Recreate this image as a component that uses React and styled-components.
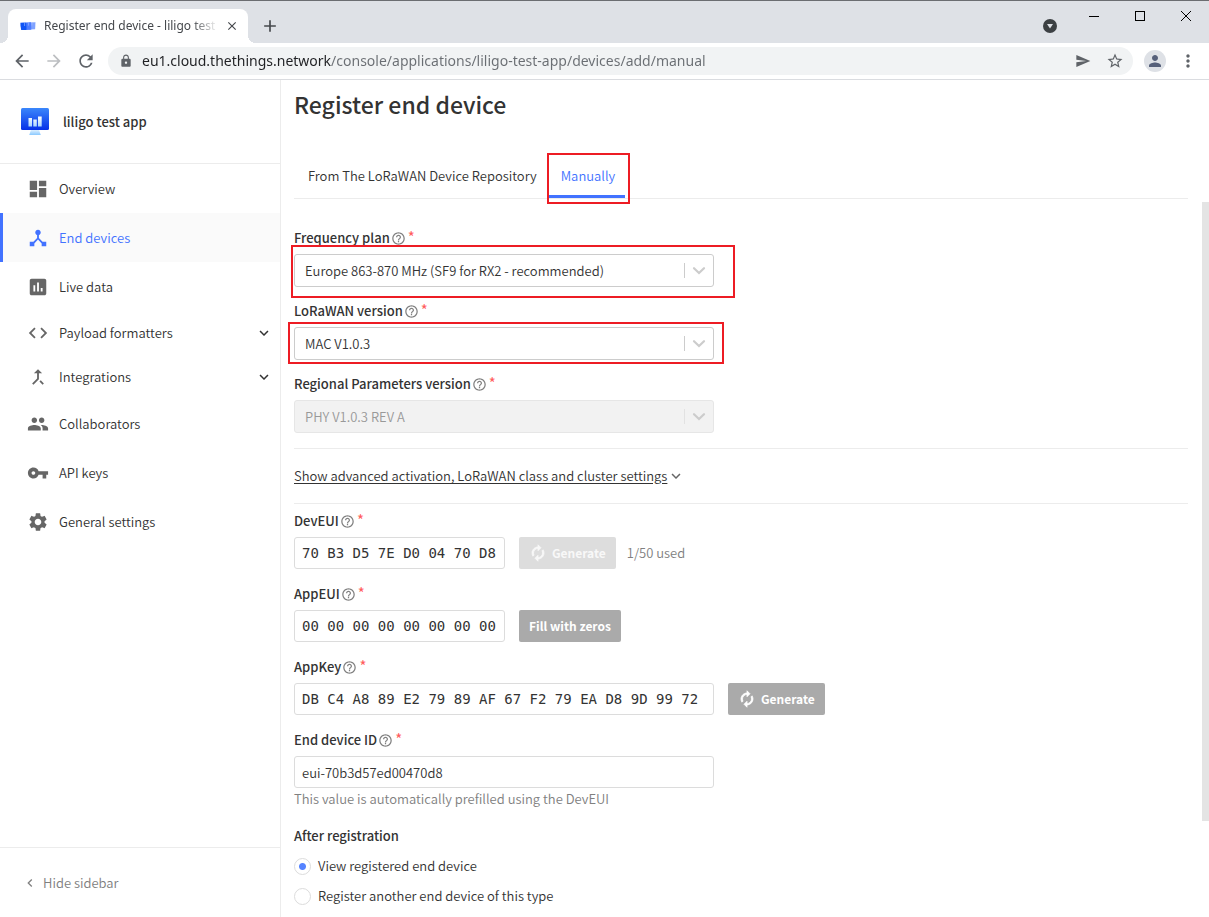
import React, { useState } from 'react';
import styled, { createGlobalStyle, css } from 'styled-components';
import {
  MdDashboard,
  MdDeviceHub,
  MdInsertChart,
  MdCode,
  MdCallMerge,
  MdPeople,
  MdVpnKey,
  MdSettings,
  MdKeyboardArrowDown,
  MdKeyboardArrowLeft,
  MdAutorenew,
  MdHelpOutline,
  MdSend,
  MdStarBorder,
  MdPerson,
  MdMoreVert,
  MdArrowBack,
  MdArrowForward,
  MdRefresh,
  MdLock,
  MdAdd,
  MdClose,
} from 'react-icons/md';

const color = {
  text: '#333333',
  subtle: '#808080',
  icon: '#666666',
  line: '#ececec',
  field: '#dcdcdc',
  blue: '#4272ff',
  red: '#ff5c5c',
  mark: '#ed1c24',
  chrome: '#dee1e6',
  chromeIcon: '#5f6368',
};

const GlobalStyle = createGlobalStyle`
  *, *::before, *::after { box-sizing: border-box; }
  body {
    margin: 0;
    background: #ffffff;
    color: ${color.text};
    font-family: 'Noto Sans CJK SC', 'Noto Sans', sans-serif;
    font-size: 13px;
    font-weight: 350;
    line-height: 18px;
  }
  button, input, select { font: inherit; color: inherit; margin: 0; }
  svg { display: block; flex: none; }
`;

const Window = styled.div`
  display: flex;
  flex-direction: column;
  height: 100vh;
  overflow: hidden;
`;

/* Browser frame */

const TabStrip = styled.div`
  display: flex;
  flex: none;
  height: 43px;
  padding-left: 8px;
  background: ${color.chrome};
  border-top: 1px solid #6b6d71;
`;

const BrowserTab = styled.div`
  position: relative;
  display: flex;
  align-items: center;
  width: 240px;
  height: 34px;
  margin-top: 8px;
  padding: 0 9px 0 12px;
  background: #ffffff;
  border-radius: 8px 8px 0 0;
  &::before, &::after {
    content: '';
    position: absolute;
    bottom: 0;
    width: 8px;
    height: 8px;
  }
  &::before {
    right: 100%;
    background: radial-gradient(circle at 0 0, transparent 8px, #ffffff 8px);
  }
  &::after {
    left: 100%;
    background: radial-gradient(circle at 100% 0, transparent 8px, #ffffff 8px);
  }
`;

const TabTitle = styled.span`
  flex: 1;
  margin: 0 7px 0 8px;
  overflow: hidden;
  white-space: nowrap;
  color: #45484c;
  font-family: 'Noto Sans', sans-serif;
  font-size: 12px;
  font-weight: 400;
  line-height: 20px;
  mask-image: linear-gradient(to right, #000 85%, transparent);
`;

const PlainButton = styled.button`
  display: flex;
  align-items: center;
  justify-content: center;
  width: ${(p) => p.$w || 16}px;
  padding: 0;
  border: 0;
  background: none;
  color: ${(p) => p.$color || color.chromeIcon};
`;

const NewTabButton = styled(PlainButton)`
  height: 34px;
  margin-top: 8px;
`;

const WindowControls = styled.div`
  display: flex;
  margin-left: auto;
  height: 29px;
`;

const Toolbar = styled.div`
  display: flex;
  flex: none;
  align-items: center;
  height: 37px;
  padding: 0 13px;
  border-bottom: 1px solid #dadce0;
  background: #ffffff;
`;

const NavButtons = styled.div`
  display: flex;
  gap: 14px;
  margin-right: 13px;
`;

const AddressBar = styled.div`
  display: flex;
  flex: 1;
  align-items: center;
  height: 28px;
  padding: 0 10px 0 11px;
  border-radius: 14px;
  background: #f1f3f4;
`;

const AddressInput = styled.input`
  flex: 1;
  min-width: 0;
  margin-left: 9px;
  padding: 0;
  border: 0;
  outline: 0;
  font-family: 'Noto Sans', sans-serif;
  font-size: 14px;
  font-weight: 400;
  line-height: 20px;
  color: transparent;
  background: linear-gradient(to right, #202124 189px, #6a6e73 189px);
  background-clip: text;
`;

const Avatar = styled.button`
  display: flex;
  align-items: center;
  justify-content: center;
  width: 22px;
  height: 22px;
  margin: 0 14px 0 11px;
  padding: 0;
  border: 0;
  border-radius: 50%;
  background: ${color.chrome};
  color: #56607a;
`;

/* Console */

const Body = styled.div`
  display: flex;
  flex: 1;
  min-height: 0;
`;

const Sidebar = styled.aside`
  display: flex;
  flex: none;
  flex-direction: column;
  width: 281px;
  border-right: 1px solid ${color.line};
`;

const AppHeader = styled.header`
  display: flex;
  align-items: center;
  gap: 14px;
  height: 84px;
  padding-left: 21px;
  border-bottom: 1px solid ${color.line};
  font-weight: 500;
`;

const Nav = styled.nav`
  display: flex;
  flex: 1;
  flex-direction: column;
`;

const itemStyle = css`
  display: flex;
  align-items: center;
  width: 100%;
  height: ${(p) => (p.$group ? 44 : 49)}px;
  padding: 0 7px 0 24px;
  border: 0;
  border-left: 3px solid ${(p) => (p.$active ? color.blue : 'transparent')};
  background: ${(p) => (p.$active ? '#fafafa' : 'none')};
  color: ${(p) => (p.$active ? color.blue : color.text)};
  text-decoration: none;
  > svg:first-child { color: ${(p) => (p.$active ? color.blue : color.icon)}; }
`;

const NavLink = styled.a`${itemStyle}`;
const NavGroup = styled.button`${itemStyle}`;

const NavLabel = styled.span`
  flex: 1;
  margin-left: 10px;
  text-align: left;
`;

const HideButton = styled.button`
  display: flex;
  align-items: center;
  gap: 5px;
  height: 70px;
  padding: 0 22px;
  border: 0;
  border-top: 1px solid ${color.line};
  background: none;
  color: ${color.subtle};
`;

const Main = styled.main`
  flex: 1;
  min-width: 0;
  overflow: hidden;
  padding: 8px 14px 0 13px;
`;

const ScrollTrack = styled.div`
  display: flex;
  flex: none;
  width: 7px;
  padding: 122px 0 96px;
`;

const ScrollThumb = styled.div`
  flex: 1;
  background: #e4e4e4;
`;

const Title = styled.h1`
  margin: 0;
  font-size: 23px;
  line-height: 32px;
  font-weight: 500;
`;

const Tabs = styled.div`
  display: flex;
  height: 46px;
  margin-top: 33px;
  border-bottom: 1px solid ${color.line};
`;

const TabButton = styled.button`
  position: relative;
  padding: 3px 10px 0 14px;
  border: 0;
  border-bottom: 3px solid ${(p) => (p.$active ? color.blue : 'transparent')};
  background: none;
  color: ${(p) => (p.$active ? color.blue : color.text)};
`;

/* Red frame laid over a part of the page that the reader should notice. */
const Mark = styled.span`
  position: absolute;
  inset: ${(p) => p.$inset};
  border: 2px solid ${color.mark};
  pointer-events: none;
`;

const Form = styled.form`
  display: flex;
  flex-direction: column;
`;

const Fields = styled.div`
  display: flex;
  flex-direction: column;
  gap: ${(p) => p.$gap}px;
  padding: ${(p) => p.$pad};
`;

const Label = styled.label`
  display: flex;
  align-items: center;
  height: 18px;
  margin-bottom: 7px;
  font-weight: 500;
  > svg { margin: 1px 0 0 1px; color: #808080; }
`;

const Star = styled.span`
  align-self: flex-start;
  margin: -1px 0 0 2px;
  color: ${color.red};
  font-size: 15px;
  font-weight: 400;
`;

const Row = styled.div`
  display: flex;
  align-items: center;
  gap: 14px;
`;

const SelectBox = styled.div`
  position: relative;
  width: 420px;
  height: 33px;
`;

const Select = styled.select`
  appearance: none;
  width: 100%;
  height: 100%;
  padding: 0 40px 0 10px;
  border: 1px solid ${(p) => (p.disabled ? '#e6e6e6' : '#cccccc')};
  border-radius: 3px;
  background: ${(p) => (p.disabled ? '#f2f2f2' : '#ffffff')};
  color: ${(p) => (p.disabled ? '#999999' : color.text)};
  opacity: 1;
`;

const Arrow = styled.span`
  position: absolute;
  top: 9px;
  right: 1px;
  display: flex;
  align-items: center;
  justify-content: center;
  width: 29px;
  height: 15px;
  border-left: 1px solid ${(p) => (p.$disabled ? '#e2e2e2' : '#cccccc')};
  pointer-events: none;
`;

const Input = styled.input`
  width: ${(p) => (p.$short ? 211 : 420)}px;
  height: 32px;
  padding: 0 7px;
  border: 1px solid ${color.field};
  border-radius: 3px;
  background: #ffffff;
  ${(p) => p.$mono && css`
    font-family: 'DejaVu Sans Mono', monospace;
    font-size: 14px;
  `}
`;

const Button = styled.button`
  display: flex;
  align-items: center;
  gap: 5px;
  height: 32px;
  padding: 0 10px;
  border: 0;
  border-radius: 2px;
  background: ${(p) => (p.disabled ? '#dddddd' : '#aaaaaa')};
  color: ${(p) => (p.disabled ? '#f8f8f8' : '#ffffff')};
  font-size: 12px;
  font-weight: 700;
  > svg path:last-child { stroke: currentColor; stroke-width: 1; }
`;

const Note = styled.span`
  margin-left: -3px;
  color: ${color.subtle};
`;

const Hint = styled.p`
  margin: 2px 0 0;
  color: ${color.subtle};
`;

const Advanced = styled.div`
  display: flex;
  align-items: center;
  height: 56px;
  border: solid ${color.line};
  border-width: 1px 0;
`;

const AdvancedButton = styled.button`
  display: flex;
  align-items: center;
  padding: 0;
  border: 0;
  background: none;
  > span { text-decoration: underline; text-underline-offset: 2px; }
`;

const RadioGroup = styled.fieldset`
  display: flex;
  flex-direction: column;
  gap: 12px;
  margin: 10px 0 0;
  padding: 0;
  border: 0;
  > legend { margin-bottom: 12px; padding: 0; font-weight: 500; }
`;

const RadioLabel = styled.label`
  display: flex;
  align-items: center;
  gap: 7px;
`;

const Radio = styled.input`
  appearance: none;
  width: 17px;
  height: 17px;
  border: 1px solid ${color.field};
  border-radius: 50%;
  background: #ffffff;
  &:checked {
    background: radial-gradient(circle, #5583ff 3px, #ffffff 4px);
  }
`;

const Favicon = () => (
  <svg width="16" height="16" viewBox="0 0 16 16">
    <path d="M9 4.500l6.500-.3-.4 7-6 .4z" fill="#7fa2ff" />
    <path d="M5 4.600l6-.3.3 7.400-5 .2z" fill="#4d7dff" />
    <path d="M.4 4.800l4-.4 1.800.5.4 7-5.400.2L.5 8z" fill="#0f54f5" />
    <path d="M4.600 5v3M8.600 4.600v3M12 4.500v3" stroke="#a9c0ff" strokeWidth=".6" />
  </svg>
);

const AppLogo = () => (
  <svg width="28" height="28" viewBox="0 0 28 28">
    <defs>
      <linearGradient id="screen" x1="0" y1="0" x2="0" y2="1">
        <stop offset="0" stopColor="#3b87fb" />
        <stop offset="1" stopColor="#0530e8" />
      </linearGradient>
      <linearGradient id="stand" x1="0" y1="0" x2="0" y2="1">
        <stop offset="0" stopColor="#dff1ff" />
        <stop offset="1" stopColor="#8ac9ff" />
      </linearGradient>
      <linearGradient id="bars" x1="0" y1="0" x2="0" y2="1">
        <stop offset="0" stopColor="#ffffff" />
        <stop offset="1" stopColor="#a9d6ff" />
      </linearGradient>
    </defs>
    <path d="M10 22h8l1.800 5H8.200z" fill="url(#stand)" />
    <rect width="28" height="22" rx="1.500" fill="url(#screen)" />
    <path d="M7.500 10h3.500v8.500H7.500zM12.300 11.500h3.500v7h-3.500zM17 8.500h3.700v10H17z" fill="url(#bars)" />
  </svg>
);

const Chevron = () => (
  <svg width="14" height="10" viewBox="0 0 14 10" fill="none" stroke="#cccccc" strokeWidth="2.200">
    <path d="M2 2.200l5 4.800 5-4.800" strokeLinecap="round" />
  </svg>
);

const FieldLabel = ({ id, children }) => (
  <Label htmlFor={id}>
    {children}
    <MdHelpOutline size={15} />
    <Star>*</Star>
  </Label>
);

const SelectField = ({ id, label, value, disabled, mark }) => (
  <div>
    <FieldLabel id={id}>{label}</FieldLabel>
    <SelectBox>
      <Select id={id} disabled={disabled} defaultValue={value}>
        <option>{value}</option>
      </Select>
      <Arrow $disabled={disabled}>
        <Chevron />
      </Arrow>
      {mark && <Mark $inset={mark} />}
    </SelectBox>
  </div>
);

const TextField = ({ id, label, value, short, mono, hint, children }) => (
  <div>
    <FieldLabel id={id}>{label}</FieldLabel>
    <Row>
      <Input id={id} defaultValue={value} $short={short} $mono={mono} />
      {children}
    </Row>
    {hint && <Hint>{hint}</Hint>}
  </div>
);

const navItems = [
  { label: 'Overview', icon: MdDashboard },
  { label: 'End devices', icon: MdDeviceHub, active: true },
  { label: 'Live data', icon: MdInsertChart },
  { label: 'Payload formatters', icon: MdCode, group: true },
  { label: 'Integrations', icon: MdCallMerge, group: true },
  { label: 'Collaborators', icon: MdPeople },
  { label: 'API keys', icon: MdVpnKey },
  { label: 'General settings', icon: MdSettings },
];

const NavItem = ({ label, icon: Icon, active, group }) => {
  const Item = group ? NavGroup : NavLink;
  return (
    <Item $active={active} $group={group} {...(group ? { type: 'button' } : { href: '#' })}>
      <Icon size={22} />
      <NavLabel>{label}</NavLabel>
      {group && <MdKeyboardArrowDown size={18} />}
    </Item>
  );
};

const BrowserFrame = () => (
  <>
    <TabStrip>
      <BrowserTab>
        <Favicon />
        <TabTitle>Register end device - liligo test app</TabTitle>
        <PlainButton aria-label="Close tab" $color="#45484c" $w={14}>
          <MdClose size={14} />
        </PlainButton>
      </BrowserTab>
      <NewTabButton aria-label="New tab" $color="#45484c" $w={44}>
        <MdAdd size={20} />
      </NewTabButton>
      <WindowControls>
        <PlainButton aria-label="Search tabs" $w={42}>
          <svg width="14" height="36" viewBox="0 0 14 36">
            <circle cx="7" cy="28" r="7" fill="#3c4043" />
            <path d="M4 26h6l-3 4.500z" fill="#dee1e6" />
          </svg>
        </PlainButton>
        <PlainButton aria-label="Minimize" $w={46}>
          <svg width="10" height="10"><path d="M0 5.500h10" stroke="#000" /></svg>
        </PlainButton>
        <PlainButton aria-label="Maximize" $w={46}>
          <svg width="10" height="10"><rect x=".5" y=".5" width="9" height="9" fill="none" stroke="#000" /></svg>
        </PlainButton>
        <PlainButton aria-label="Close" $w={46}>
          <svg width="10" height="10"><path d="M0 0l10 10M10 0L0 10" stroke="#000" /></svg>
        </PlainButton>
      </WindowControls>
    </TabStrip>
    <Toolbar>
      <NavButtons>
        <PlainButton aria-label="Back" $w={18}><MdArrowBack size={20} /></PlainButton>
        <PlainButton aria-label="Forward" $w={18} $color="#bcbec1"><MdArrowForward size={20} /></PlainButton>
        <PlainButton aria-label="Reload" $w={18}><MdRefresh size={20} /></PlainButton>
      </NavButtons>
      <AddressBar>
        <MdLock size={14} color={color.chromeIcon} />
        <AddressInput
          aria-label="Address"
          defaultValue="eu1.cloud.thethings.network/console/applications/liligo-test-app/devices/add/manual"
        />
        <PlainButton aria-label="Share" $w={48}><MdSend size={16} /></PlainButton>
        <PlainButton aria-label="Bookmark" $w={16}><MdStarBorder size={18} /></PlainButton>
      </AddressBar>
      <Avatar aria-label="Profile"><MdPerson size={18} /></Avatar>
      <PlainButton aria-label="Menu" $w={16}><MdMoreVert size={20} /></PlainButton>
    </Toolbar>
  </>
);

export default function App() {
  const [after, setAfter] = useState('view');
  return (
    <Window>
      <GlobalStyle />
      <BrowserFrame />
      <Body>
        <Sidebar>
          <AppHeader>
            <AppLogo />
            liligo test app
          </AppHeader>
          <Nav>
            {navItems.map((item) => (
              <NavItem key={item.label} {...item} />
            ))}
          </Nav>
          <HideButton type="button">
            <MdKeyboardArrowLeft size={16} />
            Hide sidebar
          </HideButton>
        </Sidebar>
        <Main>
          <Title>Register end device</Title>
          <Tabs>
            <TabButton type="button">From The LoRaWAN Device Repository</TabButton>
            <TabButton type="button" $active>
              Manually
              <Mark $inset="0 -5px -9px 0" />
            </TabButton>
          </Tabs>
          <Form>
            <Fields $gap={15} $pad="30px 0 15px">
              <SelectField
                id="frequency-plan"
                label="Frequency plan"
                value="Europe 863-870 MHz (SF9 for RX2 - recommended)"
                mark="-9px -21px -11px -3px"
              />
              <SelectField
                id="lorawan-version"
                label="LoRaWAN version"
                value="MAC V1.0.3"
                mark="-5px -10px -4px -6px"
              />
              <SelectField
                id="regional-version"
                label="Regional Parameters version"
                value="PHY V1.0.3 REV A"
                disabled
              />
            </Fields>
            <Advanced>
              <AdvancedButton type="button">
                <span>Show advanced activation, LoRaWAN class and cluster settings</span>
                <MdKeyboardArrowDown size={18} color={color.icon} />
              </AdvancedButton>
            </Advanced>
            <Fields $gap={16} $pad="8px 0 9px">
              <TextField id="dev-eui" label="DevEUI" value="70 B3 D5 7E D0 04 70 D8" short mono>
                <Button type="button" disabled>
                  <MdAutorenew size={18} />
                  Generate
                </Button>
                <Note>1/50 used</Note>
              </TextField>
              <TextField id="app-eui" label="AppEUI" value="00 00 00 00 00 00 00 00" short mono>
                <Button type="button">Fill with zeros</Button>
              </TextField>
              <TextField
                id="app-key"
                label="AppKey"
                value="DB C4 A8 89 E2 79 89 AF 67 F2 79 EA D8 9D 99 72"
                mono
              >
                <Button type="button">
                  <MdAutorenew size={18} />
                  Generate
                </Button>
              </TextField>
              <TextField
                id="device-id"
                label="End device ID"
                value="eui-70b3d57ed00470d8"
                hint="This value is automatically prefilled using the DevEUI"
              />
            </Fields>
            <RadioGroup>
              <legend>After registration</legend>
              <RadioLabel>
                <Radio type="radio" name="after" checked={after === 'view'} onChange={() => setAfter('view')} />
                View registered end device
              </RadioLabel>
              <RadioLabel>
                <Radio type="radio" name="after" checked={after === 'another'} onChange={() => setAfter('another')} />
                Register another end device of this type
              </RadioLabel>
            </RadioGroup>
          </Form>
        </Main>
        <ScrollTrack>
          <ScrollThumb />
        </ScrollTrack>
      </Body>
    </Window>
  );
}
